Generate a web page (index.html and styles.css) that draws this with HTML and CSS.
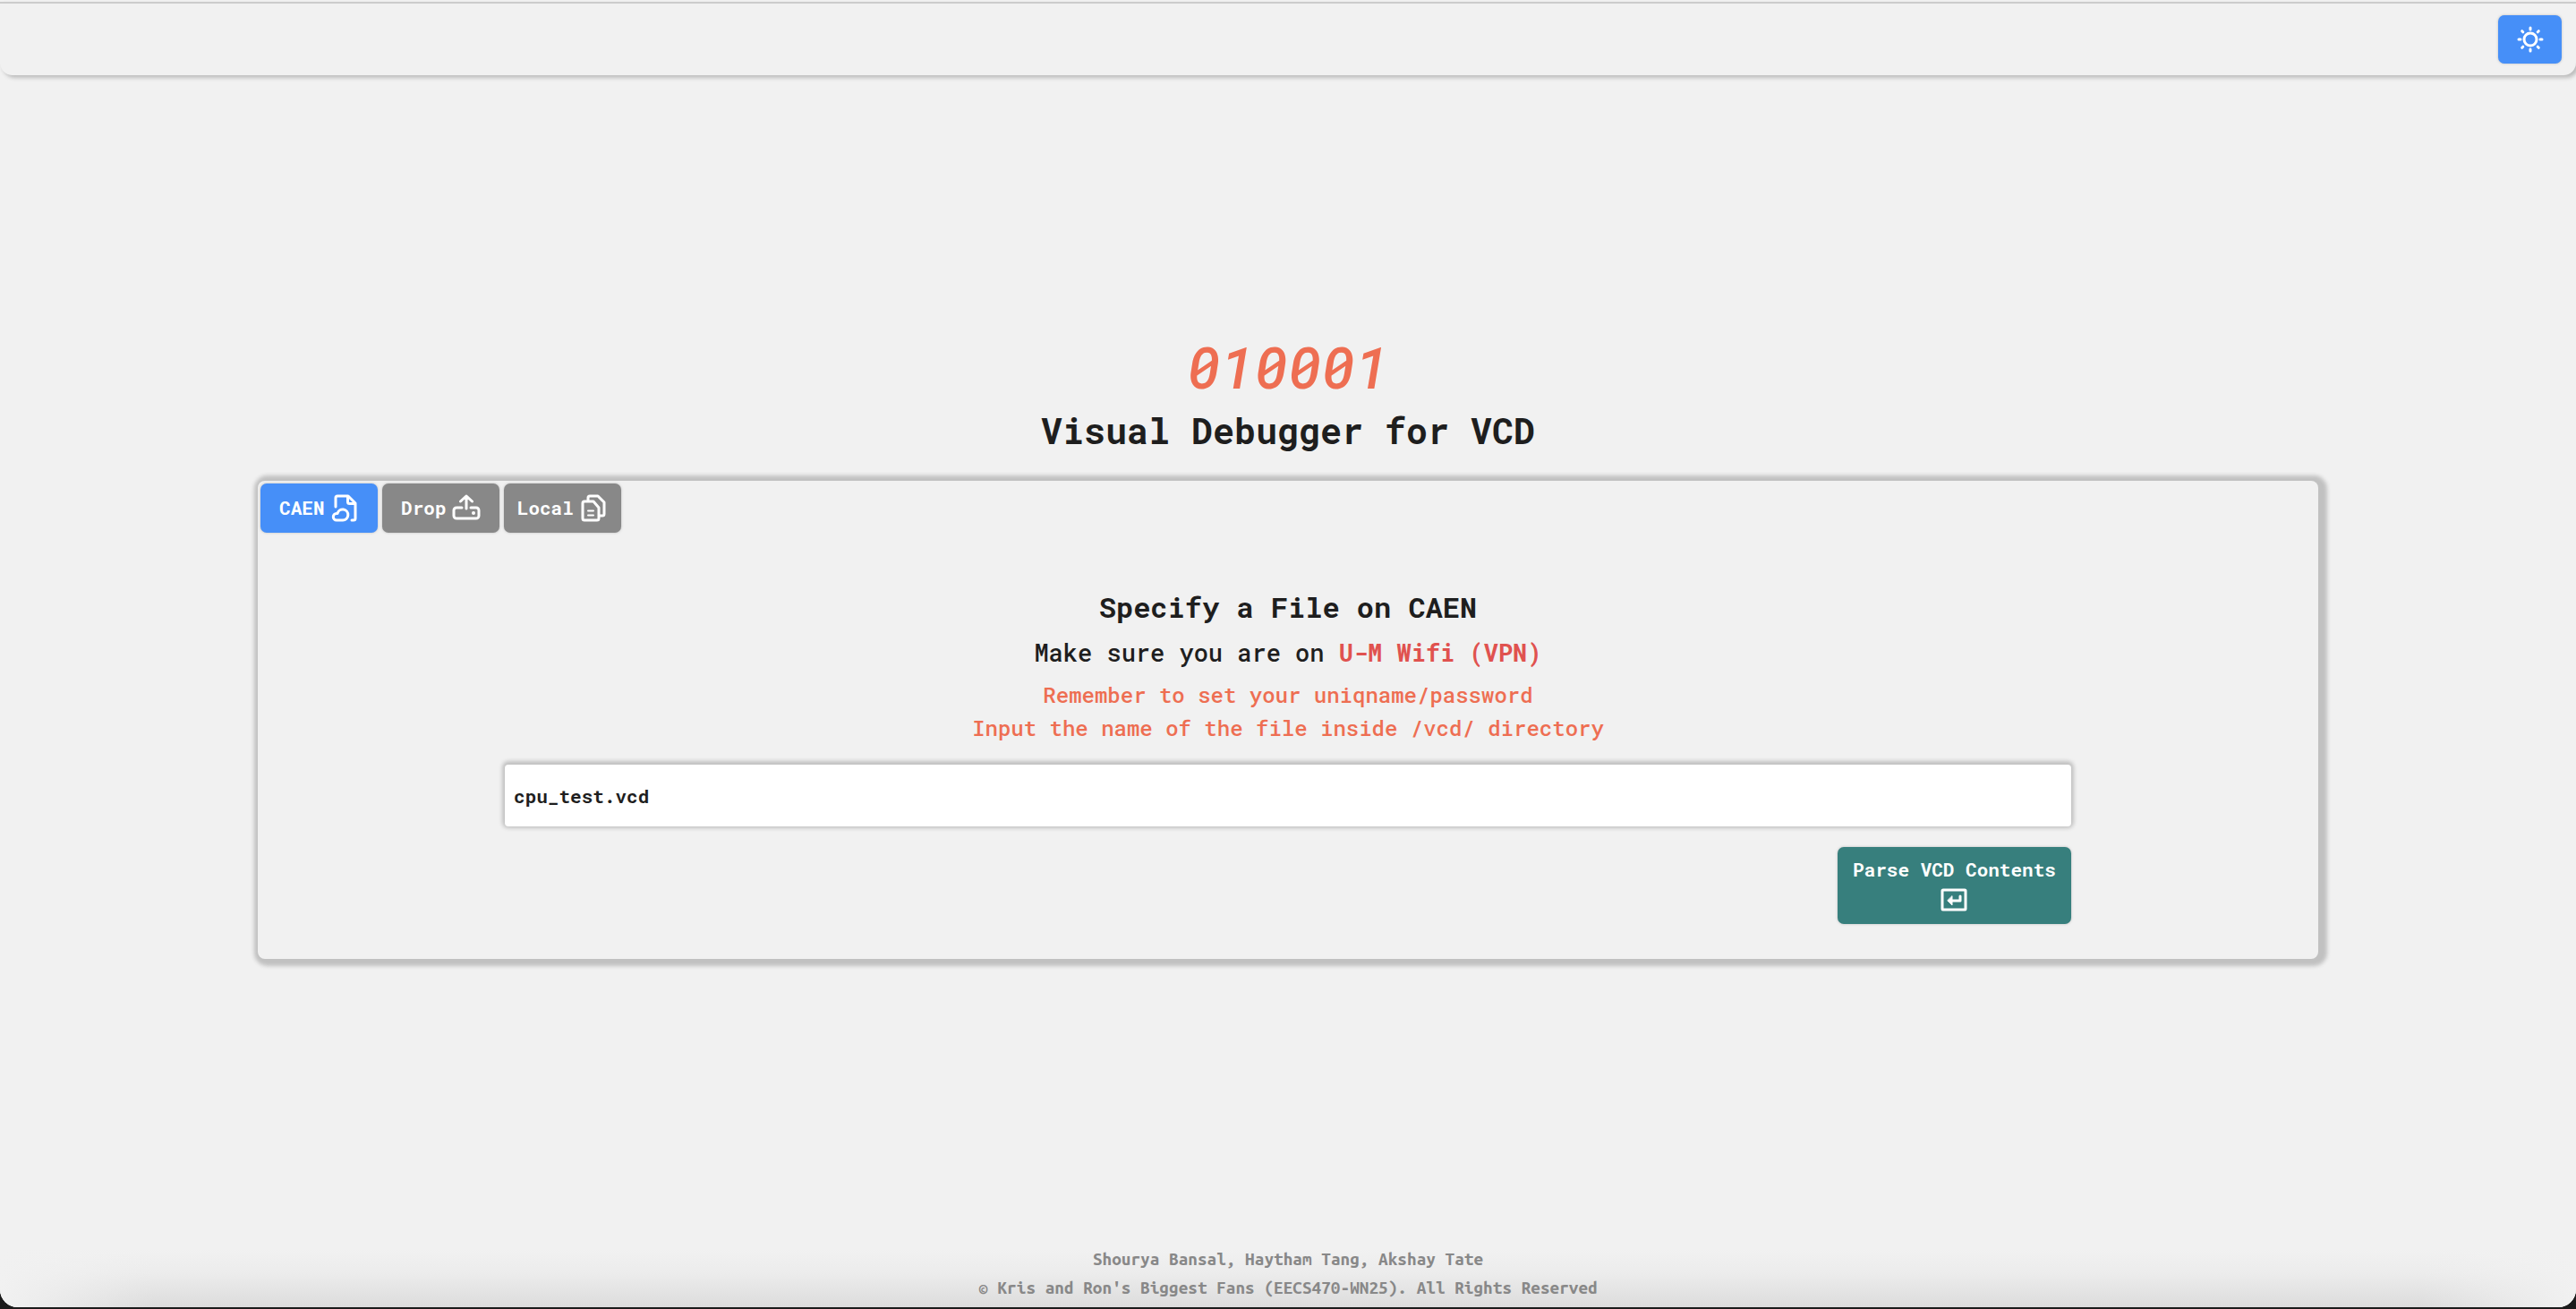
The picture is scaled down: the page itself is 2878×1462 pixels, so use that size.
FILE: index.html
```html
<!DOCTYPE html>
<html lang="en">
<head>
<meta charset="utf-8">
<meta name="viewport" content="width=device-width, initial-scale=1">
<title>Visual Debugger for VCD</title>
<link rel="stylesheet" href="styles.css">
</head>
<body>
<div class="page">
  <header class="nav">
    <button class="btn theme" type="button" aria-label="Toggle theme">
      <svg class="icon" viewBox="0 0 32 32" aria-hidden="true"><circle cx="16" cy="16" r="7"/><path d="M16 3v2M16 27v2M3 16h2M27 16h2M6.700 6.700l1.100 1.100M24.200 24.200l1.100 1.100M6.700 25.300l1.100-1.100M24.200 7.800l1.100-1.100"/></svg>
    </button>
  </header>
  <main class="main">
    <p class="mark">010001</p>
    <h1 class="title">Visual Debugger for VCD</h1>
    <section class="panel">
      <div class="tabs">
        <button class="btn tab active" type="button">CAEN
          <svg class="icon" viewBox="0 0 32 32" aria-hidden="true"><path d="M6 15V5a2 2 0 0 1 2-2h12l8 8V28a2 2 0 0 1-2 2h-2"/><path d="M19.500 4v5.500a2 2 0 0 0 2 2h6"/><path d="M7 30a3.700 3.700 0 0 1 0-7.400h1a6 6 0 1 1 6 7.400z"/></svg>
        </button>
        <button class="btn tab" type="button">Drop
          <svg class="icon" viewBox="0 0 32 32" aria-hidden="true"><path d="M11 16H5a3 3 0 0 0-3 3v6a3 3 0 0 0 3 3h22a3 3 0 0 0 3-3v-6a3 3 0 0 0-3-3h-6M16 17V3M9.500 9L16 3l6.500 6"/><circle class="dot" cx="24" cy="22" r="2"/></svg>
        </button>
        <button class="btn tab" type="button">Local
          <svg class="icon" viewBox="0 0 32 32" aria-hidden="true"><path d="M10 8V5a2 2 0 0 1 2-2h9l7 7v13a2 2 0 0 1-2 2h-3"/><path d="M6 9h10l6 7v12a2 2 0 0 1-2 2H6a2 2 0 0 1-2-2V11a2 2 0 0 1 2-2z"/><path class="thin" d="M10 19.500h6M10 24.500h6"/></svg>
        </button>
      </div>
      <form class="form" onsubmit="return false">
        <h2 class="heading">Specify a File on CAEN</h2>
        <p class="lead">Make sure you are on <strong class="alert">U-M Wifi (VPN)</strong></p>
        <p class="note">Remember to set your uniqname/password</p>
        <label class="note" for="file">Input the name of the file inside /vcd/ directory</label>
        <input class="field" id="file" type="text" value="cpu_test.vcd">
        <button class="btn parse" type="submit">Parse VCD Contents
          <svg class="icon" viewBox="0 0 32 32" aria-hidden="true"><rect x="3" y="5" width="26" height="22" rx="1"/><path d="M23 12v5H11"/><path class="fill" d="M14 12v10l-5-5z"/></svg>
        </button>
      </form>
    </section>
  </main>
  <footer class="footer">
    <p>Shourya Bansal, Haytham Tang, Akshay Tate</p>
    <p>© Kris and Ron's Biggest Fans (EECS470-WN25). All Rights Reserved</p>
  </footer>
</div>
</body>
</html>
```
FILE: styles.css
```css
* { box-sizing: border-box; margin: 0; }

body {
  background: #1b1b1b;
  color: #1e1e1e;
  font-family: "Roboto Mono", "DejaVu Sans Mono", monospace;
  padding-bottom: 2px;
}

.page {
  display: flex;
  flex-direction: column;
  min-height: calc(100vh - 2px);
  padding-top: 2px;
  background: #f1f1f1;
  border-radius: 0 0 20px 20px;
  overflow: hidden;
}

.nav {
  display: flex;
  justify-content: flex-end;
  padding: 13px 16px;
  border-top: 2px solid #ccc;
  border-radius: 0 0 14px 14px;
  box-shadow: 3px 3px 4px 0 #bdbdbd;
}

.btn {
  display: flex;
  align-items: center;
  justify-content: center;
  border: 0;
  border-radius: 7px;
  box-shadow: 0 0 3px #bbb;
  color: #fff;
  font: bold 21px/32px "Roboto Mono", "DejaVu Sans Mono", monospace;
}

.icon {
  width: 32px;
  height: 32px;
  flex: none;
  fill: none;
  stroke: #fff;
  stroke-width: 3;
  stroke-linecap: round;
  stroke-linejoin: round;
}

.dot { fill: #fff; stroke: none; }
.fill { fill: #fff; stroke-width: 1; }
.thin { stroke-width: 2; }

.theme { width: 71px; height: 54px; background: #468ff8; }

.main {
  flex: 1;
  display: flex;
  flex-direction: column;
  align-items: center;
  justify-content: center;
}

.mark {
  margin-bottom: 4px;
  color: #ee6e52;
  font-size: 64px;
  font-style: italic;
  font-weight: 500;
  line-height: 88px;
}
.title { margin-bottom: 32px; font-size: 40px; line-height: 48px; }

.panel {
  width: 80%;
  padding: 3px 0 39px;
  border-radius: 8px;
  background: #f1f1f1;
  box-shadow: 3px 1px 4px 7px #c1c1c1;
}

.tabs { display: flex; gap: 5px; padding: 0 3px; }
.tab { width: 131px; height: 55px; padding: 0 0 2px; gap: 6px; background: #888; }
.active { background: #468ff8; }

.form {
  display: flex;
  flex-direction: column;
  align-items: center;
  width: 76%;
  margin: 63px auto 0;
}

.heading { margin-bottom: 15px; font-size: 32px; line-height: 40px; }
.lead { margin-bottom: 13px; font-size: 27px; font-weight: 500; line-height: 32px; }
.alert { color: #e0524f; }
.note { color: #ee6e52; font-size: 24px; font-weight: 500; line-height: 37px; }

.field {
  width: 100%;
  height: 69px;
  margin: 22px 0 23px;
  padding: 0 10px;
  border: 0;
  border-radius: 4px;
  background: #fff;
  box-shadow: 0 -1px 4px 3px #c1c1c1;
  color: #1e1e1e;
  font: bold 21px "Roboto Mono", "DejaVu Sans Mono", monospace;
}

.parse {
  flex-direction: column;
  align-self: flex-end;
  gap: 2px;
  height: 86px;
  padding: 0 17px 2px;
  background: #377f7d;
}

.footer {
  padding: 38px 0 6px;
  background: linear-gradient(to right, #f1f1f1, transparent 6%, transparent 94%, #f1f1f1), linear-gradient(#f1f1f1 40%, #ececec 65%, #dcdcdc);
  color: #888;
  font-family: "Ubuntu Mono", "Noto Sans Mono", "Roboto Mono", monospace;
  font-size: 19px;
  font-weight: bold;
  line-height: 32px;
  text-align: center;
}
```
